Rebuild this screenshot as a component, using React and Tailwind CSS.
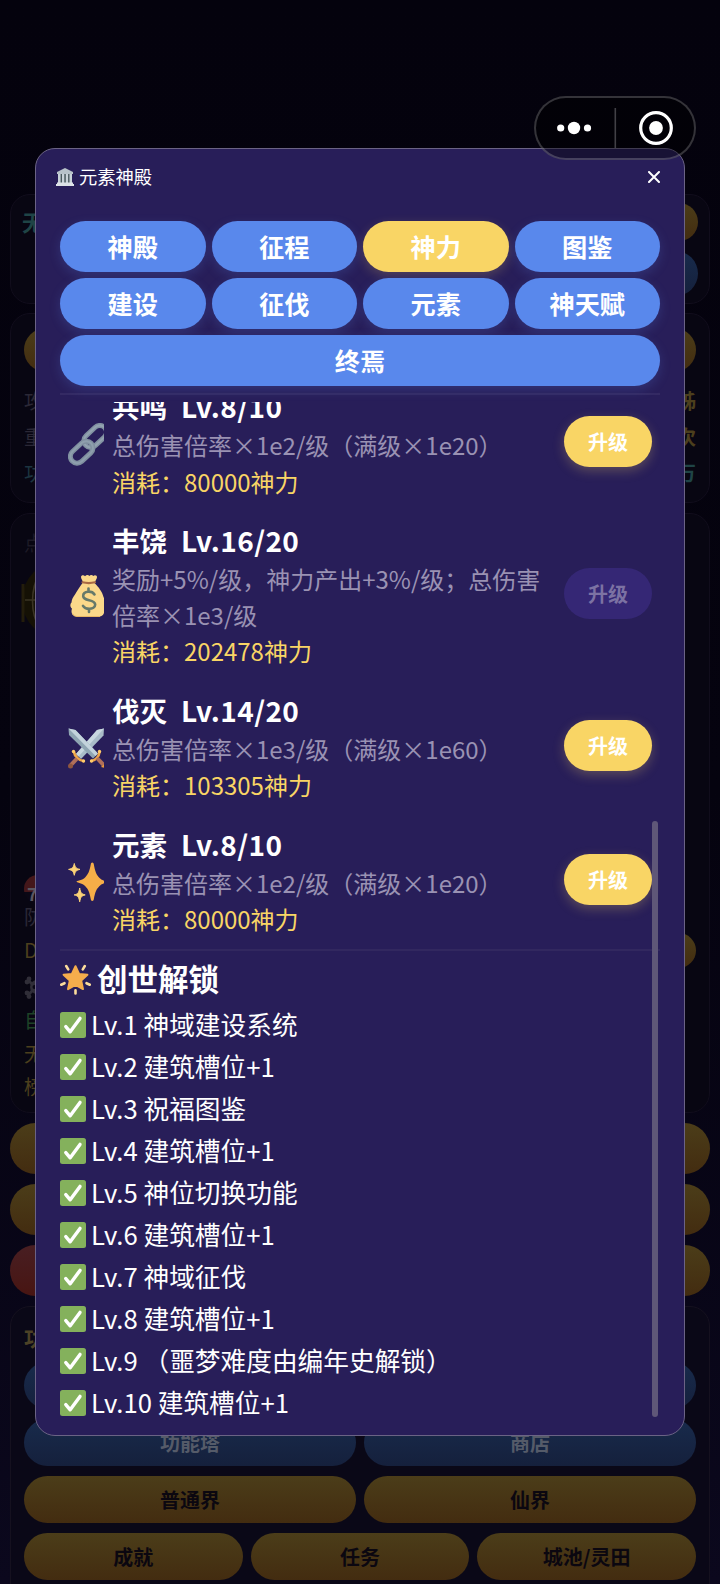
import React from 'react';

const TABS = ['神殿', '征程', '神力', '图鉴', '建设', '征伐', '元素', '神天赋'];

const POWERS = [
  { icon: LinkIcon, name: '共鸣', level: 'Lv.8/10', desc: '总伤害倍率×1e2/级（满级×1e20）', cost: '80000', ready: true },
  { icon: MoneyIcon, name: '丰饶', level: 'Lv.16/20', desc: '奖励+5%/级，神力产出+3%/级；总伤害倍率×1e3/级', cost: '202478', ready: false },
  { icon: SwordsIcon, name: '伐灭', level: 'Lv.14/20', desc: '总伤害倍率×1e3/级（满级×1e60）', cost: '103305', ready: true },
  { icon: SparklesIcon, name: '元素', level: 'Lv.8/10', desc: '总伤害倍率×1e2/级（满级×1e20）', cost: '80000', ready: true },
];

const UNLOCKS = [
  'Lv.1 神域建设系统',
  'Lv.2 建筑槽位+1',
  'Lv.3 祝福图鉴',
  'Lv.4 建筑槽位+1',
  'Lv.5 神位切换功能',
  'Lv.6 建筑槽位+1',
  'Lv.7 神域征伐',
  'Lv.8 建筑槽位+1',
  'Lv.9 （噩梦难度由编年史解锁）',
  'Lv.10 建筑槽位+1',
];

const PANEL = 'rounded-[20px] border border-[#110d1c] bg-[#080612]';
const GOLD = 'bg-linear-to-b from-[#4b3d19] to-[#432c10]';
const BLUE = 'bg-linear-to-b from-[#182b4c] to-[#15203c]';

function LinkIcon() {
  return (
    <svg className="mt-[3px]" width="36" height="44" viewBox="0 0 36 44" fill="none">
      <g transform="rotate(-43 27 14)">
        <rect x="14.500" y="7" width="26" height="13.500" rx="6.750" stroke="#8292a2" strokeWidth="5" />
        <rect x="14.500" y="7" width="26" height="13.500" rx="6.750" stroke="#93a3b1" strokeWidth="2" />
      </g>
      <g transform="rotate(-43 13.500 29)">
        <rect x="0.500" y="22.500" width="26" height="13.500" rx="6.750" stroke="#8090a0" strokeWidth="5" />
        <rect x="0.500" y="22.500" width="26" height="13.500" rx="6.750" stroke="#8e9fad" strokeWidth="2" />
      </g>
    </svg>
  );
}

function MoneyIcon() {
  return (
    <svg className="mt-[3px]" width="36" height="44" viewBox="0 0 36 44" fill="none">
      <path
        d="M14.5 9h12c4 4 8 9 9 14 .8 2 2.5 4 2 7 0 2-.5 3-1 4 .5 5-1.500 8.500-5 8.500H8.500C4.500 42.500 2.500 39 4 34.500 2 33 1.800 30 3.500 28.500c.3-3 1.500-5.500 3.500-8 2-3.500 5-8 7.500-11.500z"
        fill="#fbd88a"
      />
      <path d="M4.500 39.500c1 2 2.500 3 4.500 3h23" stroke="#e9b766" strokeWidth="1" />
      <path d="M13 3c0-2 3-2.300 4-.8C18.500.6 20.500.8 21.300 2c1-1.500 3-1.500 4 0 1-1.300 4-1 3.700 1.300-.2 1.700-1.300 3-2 4.700H15c-.7-1.700-1.800-3-2-5z" fill="#fbd88a" />
      <path d="M14.500 8.300c4 1 8.500 1 12.500 0" stroke="#a96a45" strokeWidth="2.2" strokeLinecap="round" />
      <path
        d="M26.500 20.500c-1.300-2-3.700-3-6.500-2.800-3 .2-5 2-4.800 4.400.2 5.700 11.800 2.400 12 8.400 0 2.800-2.800 4.300-6 4.300-3 0-5-1-6.200-3M20.500 14.500v3M21 35v3"
        stroke="#66796a"
        strokeWidth="2.6"
        strokeLinecap="round"
      />
    </svg>
  );
}

function SwordsIcon() {
  return (
    <svg className="mt-[3px]" width="36" height="44" viewBox="0 0 36 44" fill="none">
      <path d="M36 2.500l-.5 7L13 33l-5-5L29 4z" fill="#a9bcc8" />
      <path d="M36 2.500L10.500 30.500 8 28 29 4z" fill="#c8d7df" />
      <path d="M.5 2.500l.5 6.500L25 32.500l5-5L7.500 4z" fill="#8fa5b3" />
      <path d="M.5 2.500l27 27.500 2.500-2.500L7.500 4z" fill="#c3d3dc" />
      <path d="M6 26c.5 4 5 8.500 9.500 9M31.500 26c-.5 4-3.500 8-8 9" stroke="#efa64a" strokeWidth="2.600" strokeLinecap="round" />
      <path d="M9 32.500l-6.500 7M29 32l6.500 7" stroke="#b0705a" strokeWidth="4" />
      <circle cx="2.500" cy="40" r="2.500" fill="#8f563f" />
      <path d="M33 41l3.500-3.500v4.500z" fill="#e8973c" />
      <circle cx="5.500" cy="25.500" r="1.700" fill="#ffcb6b" />
      <circle cx="31.500" cy="25.500" r="1.700" fill="#ffcb6b" />
      <circle cx="15.500" cy="35" r="1.700" fill="#ffcb6b" />
      <circle cx="23.500" cy="35" r="1.700" fill="#ffcb6b" />
    </svg>
  );
}

function SparklesIcon() {
  return (
    <svg className="mt-[3px]" width="36" height="44" viewBox="0 0 36 44">
      <path d="M24.300 2.500c.9 0 1.300.8 1.500 1.800 1.300 7 2.500 10.500 5.500 13.500 1.500 1.700 4 2.900 7.500 3.900v.6c-3.500 1-6 2.200-7.500 4-3 3-4.200 6-5.500 13-.2 1-.6 1.700-1.500 1.700s-1.300-.7-1.500-1.700c-1.300-7-2.500-10-5.500-13-1.500-1.800-4-2.800-8-4-1-.3-1-1.100 0-1.300 4-.9 6.500-2 8-3.800 3-3 4.200-6 5.500-12.900.2-1 .6-1.800 1.500-1.800z" fill="#f6ae48" />
      <path d="M6.300 3.500c.9 4 1.700 5 5.700 5.900-4 .9-4.800 1.900-5.700 5.900-.9-4-1.700-5-5.700-5.900 4-.9 4.800-1.900 5.700-5.900z" fill="#fbd277" stroke="#fbd277" strokeLinejoin="round" />
      <path d="M11.700 28c.9 4.900 1.700 6 5.500 6.900-3.800.9-4.600 2-5.500 6.900-.9-4.900-1.700-6-5.500-6.900 3.800-.9 4.600-2 5.500-6.900z" fill="#fbd277" stroke="#fbd277" strokeLinejoin="round" />
    </svg>
  );
}

function GlowStarIcon() {
  return (
    <svg className="mt-0.5" width="31" height="31" viewBox="0 0 31 31" fill="none">
      <path
        d="M15.500 2.200l3.600 7.700 8.300.9-6.200 5.800 1.800 8.500-7.500-4.200L8 25.100l1.800-8.500-6.200-5.800 8.300-.9z"
        fill="#f5ad4c"
        stroke="#f5ad4c"
        strokeWidth="2"
        strokeLinejoin="round"
      />
      <path d="M6.200 2l2 3.300M24.800 2l-2 3.300M1.200 20.700l3.300-1.500M29.800 20.700l-3.300-1.500M15.500 26.300v3.200" stroke="#fbdc9c" strokeWidth="2.600" strokeLinecap="round" />
    </svg>
  );
}

function TempleIcon() {
  return (
    <svg width="18" height="18" viewBox="0 0 18 18">
      <path d="M9 0l8 4v2H1V4z" fill="#b7c2c9" />
      <path d="M2 6h14v9H2z" fill="#4a5a5e" />
      <path d="M2 6h2.600v9H2zM6 6h2.300v9H6zM9.800 6h2.300v9H9.800zM13.500 6H16v9h-2.500z" fill="#c8d2d8" />
      <path d="M1 14.600h16v1.500H1zM0 16.100h18V18H0z" fill="#dde3e7" />
    </svg>
  );
}

function GameButton({ tone, children }) {
  return (
    <div className={`flex h-[47px] flex-1 items-center justify-center rounded-full pt-px text-[20px] font-bold ${tone}`}>
      {children}
    </div>
  );
}

function Backdrop() {
  return (
    <div className="flex h-[1584px] flex-col bg-linear-to-b from-[#04020d] via-[#05030f] to-[#0b081d] px-2.5 pt-[194px]">
      <div className={`flex h-[110px] shrink-0 justify-between pr-[11px] pl-[11px] pt-2 ${PANEL}`}>
        <div className="pt-0.5 text-[22px] font-bold text-[#1f4446]">无</div>
        <div className="flex flex-col gap-2.5">
          <div className={`h-[38px] w-20 rounded-full ${GOLD}`} />
          <div className={`h-[45px] w-20 rounded-full ${BLUE}`} />
        </div>
      </div>

      <div className={`mt-[9px] flex h-[190px] shrink-0 flex-col px-[13px] pt-[14px] ${PANEL}`}>
        <div className={`h-[44px] shrink-0 rounded-full ${GOLD}`} />
        <div className="mt-[11px] flex h-9 items-center justify-between text-[20px] text-[#2b2836]">
          <span>攻</span>
          <span className="font-bold text-[#4c3f1d]">姊</span>
        </div>
        <div className="flex h-9 items-center justify-between text-[20px] text-[#2b2836]">
          <span>重</span>
          <span className="font-bold text-[#4c3f1d]">次</span>
        </div>
        <div className="flex h-9 items-center justify-between text-[20px] text-[#1c3440]">
          <span>功</span>
          <span className="font-bold text-[#1f4446]">万</span>
        </div>
      </div>

      <div className={`mt-[10px] flex h-[600px] shrink-0 flex-col px-[13px] pt-[14px] ${PANEL}`}>
        <div className="text-[20px] leading-[30px] text-[#1d1a26]">点</div>
        <svg className="mt-1.5 -ml-1" width="80" height="80" viewBox="0 0 80 80" fill="none">
          <circle cx="41" cy="36" r="39" fill="#151105" />
          <path d="M3 20v38" stroke="#231d0b" strokeWidth="3" />
          <path d="M5 36h12M20 8c-10 18-10 40 0 58" stroke="#3a3423" strokeWidth="1.600" />
        </svg>
        <div className="mt-[231px] flex h-[28px] w-[28px] shrink-0 items-end justify-start rounded-full bg-linear-to-b from-[#44171a] from-60% to-[#0a0714] to-60% pl-[3px] text-[18px] leading-[20px] font-bold text-[#5a5661]">
          7
        </div>
        <div className="text-[20px] leading-[27px] text-[#2b2836]">防</div>
        <div className="flex h-[40px] items-center justify-between text-[20px] text-[#4c3f1d]">
          <span>D</span>
          <div className={`h-[35px] w-20 rounded-full ${GOLD}`} />
        </div>
        <svg className="mt-1.5 shrink-0" width="22" height="24" viewBox="0 0 22 24" fill="#302e38">
          <circle cx="13" cy="11" r="7" />
          <circle cx="5" cy="3" r="2.400" />
          <circle cx="3" cy="6" r="2.400" />
          <circle cx="3" cy="17" r="2.400" />
          <circle cx="5" cy="20.500" r="2.400" />
          <path d="M3 5l2-2 6 6-2 2zM3 18l2 2 6-6-2-2z" />
          <circle cx="10.500" cy="11" r="2" fill="#080612" />
        </svg>
        <div className="mt-[3px] flex h-[34px] items-center text-[20px] text-[#1e4227]">自</div>
        <div className="flex h-[33px] items-center text-[20px] text-[#4c3f1d]">无</div>
        <div className="flex h-[33px] items-center text-[20px] text-[#4c3f1d]">榜</div>
      </div>

      <div className={`mt-[10px] h-[51px] shrink-0 rounded-full ${GOLD}`} />
      <div className={`mt-[10px] h-[51px] shrink-0 rounded-full ${GOLD}`} />
      <div className="mt-[10px] flex h-[51px] shrink-0 gap-2">
        <div className="flex-1 rounded-full bg-linear-to-b from-[#481e22] to-[#481512]" />
        <div className={`flex-1 rounded-full ${GOLD}`} />
      </div>

      <div className="mt-[10px] flex h-[400px] shrink-0 flex-col gap-2.5 rounded-[20px] border border-[#15111f] bg-[#0a0817] px-[13px] pt-[15px]">
        <div className="h-[30px] text-[21px] leading-[30px] font-bold text-[#4c4226]">功</div>
        <div className="flex shrink-0 gap-2">
          <GameButton tone={BLUE} />
          <GameButton tone={BLUE} />
        </div>
        <div className="flex shrink-0 gap-2 text-[#555b69]">
          <GameButton tone={BLUE}>功能塔</GameButton>
          <GameButton tone={BLUE}>商店</GameButton>
        </div>
        <div className="flex shrink-0 gap-2 text-[#0b0710]">
          <GameButton tone={GOLD}>普通界</GameButton>
          <GameButton tone={GOLD}>仙界</GameButton>
        </div>
        <div className="flex shrink-0 gap-2 text-[#0b0710]">
          <GameButton tone={GOLD}>成就</GameButton>
          <GameButton tone={GOLD}>任务</GameButton>
          <GameButton tone={GOLD}>城池/灵田</GameButton>
        </div>
      </div>
    </div>
  );
}

function Tab({ active, wide, children }) {
  return (
    <button
      className={`flex h-[51px] items-center justify-center rounded-full pt-px text-[25.2px] font-bold text-white ${
        active
          ? 'bg-[#f9d565] shadow-[0_4px_12px_rgba(249,213,101,0.2)]'
          : 'bg-[#5988ec] shadow-[0_4px_12px_rgba(89,136,236,0.2)]'
      } ${wide ? 'col-span-4' : ''}`}
    >
      {children}
    </button>
  );
}

function PowerRow({ power }) {
  const Icon = power.icon;
  return (
    <div className="flex items-center px-2 pt-[14px] pb-2">
      <Icon />
      <div className="ml-2 w-[436px] shrink-0">
        <div className="mb-0.5 flex items-baseline gap-[14px] text-[27.5px] leading-[38px] font-bold text-white">
          <span>{power.name}</span>
          <span className="text-[28px] tracking-[0.4px]">{power.level}</span>
        </div>
        <div className="text-[24px] leading-[35.5px] text-[#9a92b3]">{power.desc}</div>
        <div className="mt-px text-[24px] leading-[35.5px] text-[#f9d565]">消耗：{power.cost}神力</div>
      </div>
      <button
        className={`mb-[3px] ml-auto flex h-[51px] w-[88px] items-center justify-center rounded-full pt-px text-[20px] font-bold ${
          power.ready
            ? 'bg-[#f9d565] text-white shadow-[0_4px_12px_rgba(249,213,101,0.25)]'
            : 'bg-[#352775] text-[#7c72a3]'
        }`}
      >
        升级
      </button>
    </div>
  );
}

function CheckMark() {
  return (
    <svg width="26" height="26" viewBox="0 0 26 26" fill="none">
      <rect width="26" height="26" rx="2.500" fill="#84b15c" />
      <path d="M5.800 14.600l4.400 5.200L20 6.400" stroke="#fff" strokeWidth="3.400" strokeLinecap="round" strokeLinejoin="round" />
    </svg>
  );
}

function TempleDialog() {
  return (
    <div className="absolute top-[148px] left-[35px] flex h-[1288px] w-[650px] flex-col overflow-hidden rounded-[20px] border border-[#6b6385] bg-[#281e59]">
      <div className="flex h-[56px] shrink-0 items-center justify-between pr-[24px] pl-5">
        <div className="flex items-center gap-[5px] text-[18.3px] text-white">
          <TempleIcon />
          <span>元素神殿</span>
        </div>
        <svg width="12" height="12" viewBox="0 0 12 12" stroke="#fff" strokeWidth="2" strokeLinecap="round">
          <path d="M1 1l10 10M11 1L1 11" />
        </svg>
      </div>

      <div className="ml-6 mt-[15.5px] grid w-[600px] shrink-0 grid-cols-4 gap-1.5 border-b-2 border-[#342a63] pb-[7.5px]">
        {TABS.map((tab) => (
          <Tab key={tab} active={tab === '神力'}>{tab}</Tab>
        ))}
        <Tab wide>终焉</Tab>
      </div>

      <div className="relative mt-[7px] mb-[10px] ml-6 w-[600px] flex-1 overflow-hidden">
        <div className="-mt-[29px]">
          {POWERS.map((power) => (
            <PowerRow key={power.name} power={power} />
          ))}
        </div>
        <div className="mt-1 border-t-2 border-[#32285f] pt-1.5">
          <h2 className="flex h-[44px] items-center gap-[6px] text-[30.5px] font-bold text-white">
            <GlowStarIcon />
            创世解锁
          </h2>
          <ul className="mt-[3px] text-[25.700px] text-white">
            {UNLOCKS.map((item) => (
              <li key={item} className="flex h-[42px] items-center gap-[5px]">
                <CheckMark />
                <span>{item}</span>
              </li>
            ))}
          </ul>
        </div>
        <div className="absolute top-[419px] right-0.5 h-[596px] w-1.5 rounded-full bg-[#5f5778]" />
      </div>
    </div>
  );
}

function Capsule() {
  return (
    <div className="absolute top-[96px] left-[534px] flex h-16 w-[162px] items-center rounded-full border-2 border-white/20 bg-black/40">
      <svg width="158" height="60" viewBox="0 0 158 60" fill="#fff">
        <circle cx="24.700" cy="30" r="3.600" />
        <circle cx="38" cy="30" r="6.200" />
        <circle cx="51.500" cy="30" r="3.600" />
        <path d="M78.500 10h1.600v40h-1.600z" fillOpacity="0.25" />
        <circle cx="120" cy="30" r="15.300" fill="none" stroke="#fff" strokeWidth="3.200" />
        <circle cx="120" cy="30" r="6.900" />
      </svg>
    </div>
  );
}

export default function App() {
  return (
    <div className="relative h-[1584px] w-[720px] overflow-hidden font-['Noto_Sans_CJK_SC',sans-serif]">
      <Backdrop />
      <TempleDialog />
      <Capsule />
    </div>
  );
}
